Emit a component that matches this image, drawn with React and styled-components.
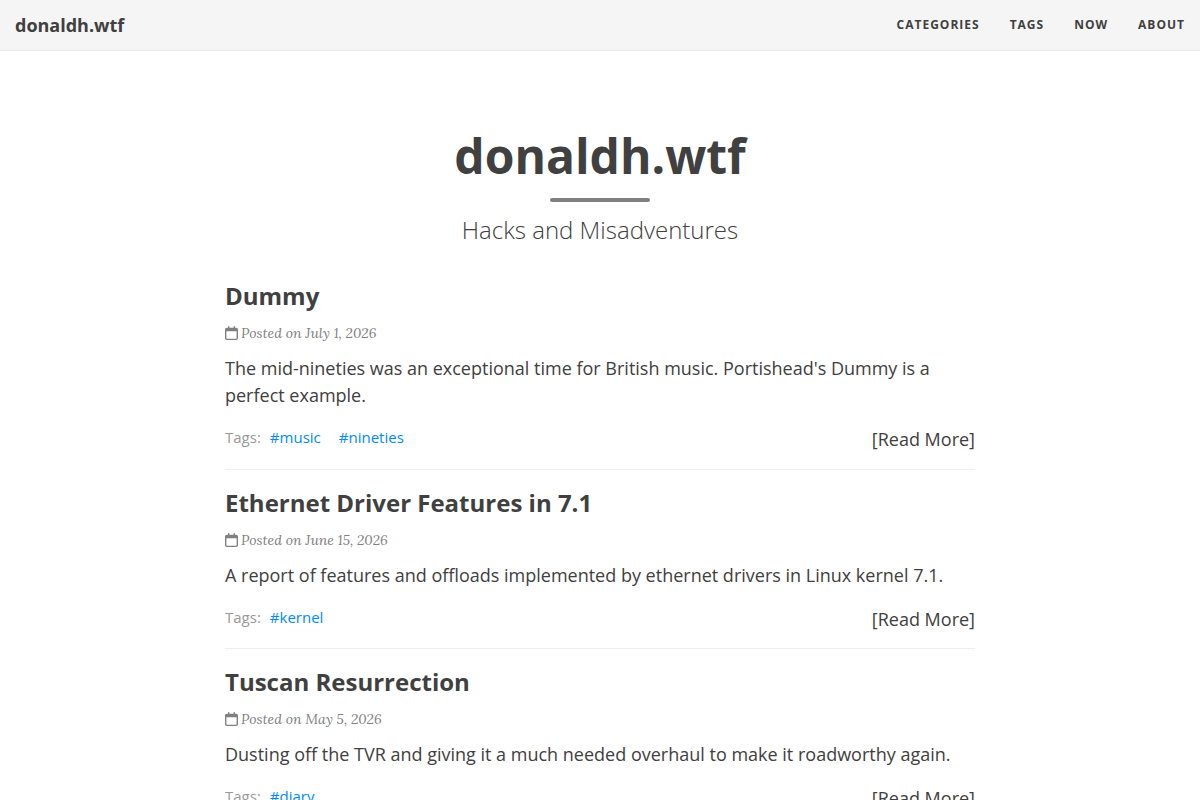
import React from "react";
import styled, { createGlobalStyle } from "styled-components";

const sans = `"Open Sans", "Helvetica Neue", Arial, sans-serif`;

const GlobalStyle = createGlobalStyle`
  *, *::before, *::after { box-sizing: border-box; }
  body {
    margin: 0;
    background: #fff;
    color: #404040;
    font-family: ${sans};
    font-size: 18px;
    line-height: 27px;
    overflow-x: hidden;
  }
  a { color: #008aff; text-decoration: none; }
`;

const Navbar = styled.nav`
  display: flex;
  align-items: center;
  justify-content: space-between;
  height: 51px;
  padding: 0 15px;
  background: #f5f5f5;
  border-bottom: 1px solid #eaeaea;
`;

const Brand = styled.a`
  color: #404040;
  font-size: 18px;
  font-weight: 700;
  line-height: 20px;
`;

const NavLinks = styled.div`
  display: flex;
  gap: 30px;
`;

const NavLink = styled.a`
  color: #404040;
  font-size: 12px;
  font-weight: 700;
  line-height: 20px;
  letter-spacing: 1px;
  text-transform: uppercase;
`;

const Header = styled.header`
  display: flex;
  flex-direction: column;
  align-items: center;
  padding: 78px 15px 20px;
  text-align: center;
`;

const Title = styled.h1`
  margin: 0;
  font-size: 48px;
  font-weight: 700;
  line-height: 53px;
`;

const Divider = styled.hr`
  width: 100px;
  height: 4px;
  margin: 16px 0 14px;
  border: 0;
  border-radius: 3px;
  background: #808080;
`;

const Subtitle = styled.p`
  margin: 0;
  font-size: 24px;
  font-weight: 300;
  line-height: 27px;
`;

const PostList = styled.main`
  max-width: 780px;
  margin: 0 auto;
  padding: 0 15px;
`;

const Post = styled.article`
  padding: 20px 0 15px;

  & + & { border-top: 1px solid #eee; }
  &:first-child { padding-bottom: 16px; }
`;

const PostTitle = styled.h2`
  margin: 0;
  font-size: 24px;
  font-weight: 700;
  line-height: 26px;

  a { color: #404040; }
`;

const Meta = styled.p`
  display: flex;
  align-items: center;
  gap: 3px;
  margin: 11px 0 8px;
  color: #808080;
  font-family: Lora, "Liberation Serif", "Times New Roman", serif;
  font-size: 14px;
  font-style: italic;
  line-height: 27px;

  svg { margin-bottom: 1px; }
`;

const Summary = styled.p`
  margin: 0;
`;

const PostFooter = styled.footer`
  display: flex;
  justify-content: space-between;
  padding-top: 17px;
`;

const Tags = styled.div`
  color: #999;
  font-size: 15px;
  line-height: 23px;

  a { margin-left: 9px; }
  a + a { margin-left: 18px; }
`;

const ReadMore = styled.a`
  color: #404040;
`;

const CalendarIcon = () => (
  <svg width="13" height="14" viewBox="0 0 448 512" preserveAspectRatio="none" fill="currentColor" aria-hidden="true">
    <path d="M152 24c0-13.300-10.700-24-24-24s-24 10.700-24 24V64H64C28.700 64 0 92.700 0 128v320c0 35.300 28.700 64 64 64H384c35.300 0 64-28.700 64-64V128c0-35.300-28.700-64-64-64H344V24c0-13.300-10.700-24-24-24s-24 10.700-24 24V64H152V24zM48 192H400V448c0 8.800-7.200 16-16 16H64c-8.800 0-16-7.200-16-16V192z" />
  </svg>
);

const navItems = ["Categories", "Tags", "Now", "About"];

const posts = [
  {
    title: "Dummy",
    date: "July 1, 2026",
    summary: "The mid-nineties was an exceptional time for British music. Portishead's Dummy is a perfect example.",
    tags: ["music", "nineties"],
  },
  {
    title: "Ethernet Driver Features in 7.1",
    date: "June 15, 2026",
    summary: "A report of features and offloads implemented by ethernet drivers in Linux kernel 7.1.",
    tags: ["kernel"],
  },
  {
    title: "Tuscan Resurrection",
    date: "May 5, 2026",
    summary: "Dusting off the TVR and giving it a much needed overhaul to make it roadworthy again.",
    tags: ["diary"],
  },
];

export default function App() {
  return (
    <>
      <GlobalStyle />
      <Navbar>
        <Brand href="#">donaldh.wtf</Brand>
        <NavLinks>
          {navItems.map((item) => (
            <NavLink key={item} href="#">{item}</NavLink>
          ))}
        </NavLinks>
      </Navbar>
      <Header>
        <Title>donaldh.wtf</Title>
        <Divider />
        <Subtitle>Hacks and Misadventures</Subtitle>
      </Header>
      <PostList>
        {posts.map((post) => (
          <Post key={post.title}>
            <PostTitle><a href="#">{post.title}</a></PostTitle>
            <Meta><CalendarIcon />Posted on {post.date}</Meta>
            <Summary>{post.summary}</Summary>
            <PostFooter>
              <Tags>
                Tags:
                {post.tags.map((tag) => (
                  <a key={tag} href="#">#{tag}</a>
                ))}
              </Tags>
              <ReadMore href="#">[Read More]</ReadMore>
            </PostFooter>
          </Post>
        ))}
      </PostList>
    </>
  );
}
